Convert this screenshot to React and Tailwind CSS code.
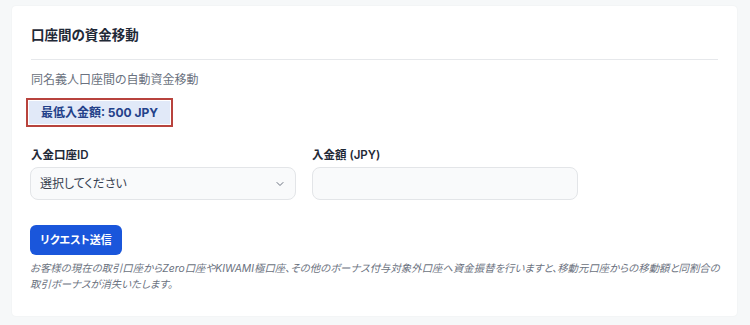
import { ChevronDown } from "lucide-react";

const App = () => {
  return (
    <div
      className="min-h-[325px] w-[750px] bg-[#f6f8f9] pt-[6px] pl-[12px] pr-[13px] [font-feature-settings:'palt']"
      style={{ fontFamily: 'Inter, "Noto Sans CJK JP", sans-serif' }}
    >
      <div className="bg-white rounded-[4px] shadow-[0_0_2px_rgba(0,0,0,0.06)] px-[19px] pt-[19px] pb-[24px] h-[310px]">
        {/* header */}
        <div className="border-b border-[#e6e8eb] pb-[14px]">
          <h2 className="text-[13.5px] leading-[20px] font-bold text-[#1f2937]">
            口座間の資金移動
          </h2>
        </div>

        <p className="mt-[11px] text-[12px] leading-[18px] text-[#6b7280]">
          同名義人口座間の自動資金移動
        </p>

        <div className="mt-[9px] ml-[-5px] inline-block border-2 border-[#b8433d] p-[1px]">
          <div className="bg-[#e1e9f8] px-[12px] h-[23px] flex items-center text-[12px] font-bold text-[#23418a]">
            最低入金額: 500 JPY
          </div>
        </div>

        <div className="mt-[20px] flex gap-[16px]">
          <div className="w-[266px] -ml-px">
            <label className="block pl-px text-[11.5px] leading-[16px] font-semibold text-[#1f2937]">
              入金口座ID
            </label>
            <div className="mt-[4px] h-[33px] rounded-[8px] border border-[#e3e5e8] bg-[#f9fafb] flex items-center justify-between pl-[9px] pr-[9px]">
              <span className="text-[12px] text-[#374151]">選択してください</span>
              <ChevronDown className="w-[12px] h-[12px] text-[#6b7280]" strokeWidth={2} />
            </div>
          </div>
          <div className="w-[266px]">
            <label className="block text-[11.5px] leading-[16px] font-semibold text-[#1f2937]">
              入金額 (JPY)
            </label>
            <div className="mt-[4px] h-[33px] rounded-[8px] border border-[#e3e5e8] bg-[#f9fafb]" />
          </div>
        </div>

        <button className="mt-[25px] -ml-px h-[30px] w-[92px] rounded-[6px] bg-[#1a56db] text-white text-[11px] font-bold">
          リクエスト送信
        </button>

        <p className="mt-[6px] -ml-px text-[10.4px] leading-[16px] italic text-[#6b7280] whitespace-nowrap">
          お客様の現在の取引口座からZero口座やKIWAMI極口座、その他のボーナス付与対象外口座へ資金振替を行いますと、移動元口座からの移動額と同割合の
          <br />
          取引ボーナスが消失いたします。
        </p>
      </div>
    </div>
  );
};

export default App;
